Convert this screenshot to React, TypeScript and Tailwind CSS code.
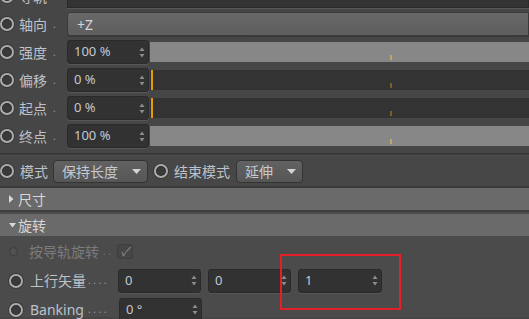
import React from "react";

const CJK = { fontFamily: '"Noto Sans", "Noto Sans CJK SC", sans-serif' };

function Radio({ dim = false }: { dim?: boolean }) {
  if (dim) {
    return (
      <div className="h-[9px] w-[9px] shrink-0 rounded-full border border-[#3c3c3c] bg-[#525252]" />
    );
  }
  return (
    <div className="h-[14px] w-[14px] shrink-0 rounded-full border-2 border-[#ababab] bg-[#3a3a3a] shadow-[inset_0_0_0_1px_#2a2a2a,0_0_0_1px_#3a3a3a]" />
  );
}

function Spin() {
  return (
    <svg width="6" height="11" viewBox="0 0 6 11" className="shrink-0">
      <path d="M3 0.5 L5.5 4 L0.5 4 Z" fill="#8c8c8c" />
      <path d="M3 10.5 L5.5 7 L0.5 7 Z" fill="#8c8c8c" />
    </svg>
  );
}

function Caret() {
  return (
    <svg width="9" height="5" viewBox="0 0 9 5" className="shrink-0">
      <path d="M0 0 L9 0 L4.5 5 Z" fill="#d4d4d4" />
    </svg>
  );
}

function NumField({ value, w = "w-[82px]" }: { value: string; w?: string }) {
  return (
    <div
      className={`flex h-[24px] ${w} shrink-0 items-center rounded-[3px] border border-[#2a2a2a] bg-[#323232] pl-[6px] pr-[3px] text-[13px] text-[#c4c9d1] shadow-[0_1px_0_#575757]`}
    >
      <span className="flex-1">{value}</span>
      <Spin />
    </div>
  );
}

function Slider({ light, zero }: { light: boolean; zero?: boolean }) {
  return (
    <div
      className={`relative ml-[1px] h-[20px] flex-1 ${
        light ? "bg-[#878787]" : "bg-[#333333]"
      }`}
    >
      {zero && <div className="absolute left-[1px] top-0 h-full w-[2px] bg-[#e29c00]" />}
      <div
        className={`absolute bottom-[2px] left-[240px] h-[5px] w-[2px] ${
          light ? "bg-[#c4a464]" : "bg-[#7d5d22]"
        }`}
      />
    </div>
  );
}

function Label({ text, dots = "." }: { text: string; dots?: string }) {
  return (
    <div className="flex w-[67px] shrink-0 items-center">
      <Radio />
      <span className="ml-[5px] text-[14px] text-[#bcc1ca]">{text}</span>
      <span className="ml-[6px] text-[10px] text-[#9a9a9a]">{dots}</span>
    </div>
  );
}

function TopRow({ label, children }: { label: string; children: React.ReactNode }) {
  return (
    <div className="flex h-[28px] items-center">
      <Label text={label} />
      {children}
    </div>
  );
}

function Dropdown({ text, w }: { text: string; w: string }) {
  return (
    <div
      className={`flex h-[23px] ${w} items-center rounded-[4px] border border-[#343434] bg-gradient-to-b from-[#626262] to-[#565656] pl-[8px] pr-[6px] text-[14px] text-[#c6cad0]`}
    >
      <span className="flex-1">{text}</span>
      <Caret />
    </div>
  );
}

function Header({ text, open }: { text: string; open: boolean }) {
  return (
    <div className="flex h-[22px] items-center bg-[#6a6a6a] pl-[9px] text-[14px] text-[#d6d6d6]">
      {open ? (
        <svg width="7" height="5" viewBox="0 0 7 5">
          <path d="M0 0 L7 0 L3.5 4.5 Z" fill="#d8d8d8" />
        </svg>
      ) : (
        <svg width="5" height="8" viewBox="0 0 5 8">
          <path d="M0 0 L4.5 4 L0 8 Z" fill="#d8d8d8" />
        </svg>
      )}
      <span className={open ? "ml-[2px]" : "ml-[4px]"}>{text}</span>
    </div>
  );
}

export default function App() {
  return (
    <div
      className="relative h-[319px] w-[529px] overflow-hidden bg-[#464646]"
      style={CJK}
    >
      {/* top parameters, first row scrolled partly out of view */}
      <div className="-mt-[18px] pb-[3px]">
        <TopRow label="导轨">
          <div className="h-[24px] flex-1 border border-[#2a2a2a] bg-[#333333] shadow-[0_1px_0_#575757]" />
        </TopRow>
        <TopRow label="轴向">
          <div className="flex h-[24px] flex-1 items-center rounded-l-[3px] border border-[#3a3a3a] bg-gradient-to-b from-[#686868] to-[#5e5e5e] pl-[9px] text-[14px] text-[#d2d6dc] shadow-[0_1px_0_#383838]">
            +Z
          </div>
        </TopRow>
        <TopRow label="强度">
          <NumField value="100 %" />
          <Slider light />
        </TopRow>
        <TopRow label="偏移">
          <NumField value="0 %" />
          <Slider light={false} zero />
        </TopRow>
        <TopRow label="起点">
          <NumField value="0 %" />
          <Slider light={false} zero />
        </TopRow>
        <TopRow label="终点">
          <NumField value="100 %" />
          <Slider light />
        </TopRow>
      </div>

      <div className="h-[2px] bg-[#393939]" />
      <div className="h-[1px] bg-[#4e4e4e]" />

      {/* mode row */}
      <div className="flex h-[30px] items-center bg-[#474747]">
        <Radio />
        <span className="ml-[6px] text-[14px] text-[#bcc1ca]">模式</span>
        <div className="ml-[5px]">
          <Dropdown text="保持长度" w="w-[95px]" />
        </div>
        <div className="ml-[6px]">
          <Radio />
        </div>
        <span className="ml-[6px] text-[14px] text-[#bcc1ca]">结束模式</span>
        <div className="ml-[6px]">
          <Dropdown text="延伸" w="w-[67px]" />
        </div>
      </div>

      <div className="h-[2px] bg-[#3a3a3a]" />
      <Header text="尺寸" open={false} />
      <div className="h-[2px] bg-[#3e3e3e]" />
      <div className="h-[2px] bg-[#4c4c4c]" />
      <Header text="旋转" open />

      {/* rotation section */}
      <div className="h-[81px] bg-[#4b4b4b] pt-[1px]">
        <div className="flex h-[29px] items-center">
          <div className="ml-[9px]">
            <Radio dim />
          </div>
          <span className="ml-[11px] text-[14px] text-[#7b7b7b]">按导轨旋转</span>
          <span className="ml-[4px] text-[10px] text-[#777]">. .</span>
          <div className="ml-[6px] flex h-[15px] w-[16px] items-center justify-center rounded-[3px] border border-[#3e3e3e] bg-[#464646] text-[12px] italic text-[#8a8a8a]">
            ✓
          </div>
        </div>
        <div className="flex h-[29px] items-center">
          <div className="ml-[9px]">
            <Radio />
          </div>
          <span className="ml-[7px] text-[14px] text-[#bcc1ca]">上行矢量</span>
          <span className="ml-[2px] w-[30px] text-[10px] text-[#9a9a9a]">. . . .</span>
          <NumField value="0" w="w-[83px]" />
          <div className="ml-[7px]">
            <NumField value="0" w="w-[83px]" />
          </div>
          <div className="ml-[7px]">
            <NumField value="1" w="w-[84px]" />
          </div>
        </div>
        <div className="flex h-[29px] items-center">
          <div className="ml-[9px]">
            <Radio />
          </div>
          <span className="ml-[7px] text-[14px] text-[#bcc1ca]">Banking</span>
          <span className="ml-[4px] w-[31px] text-[10px] text-[#9a9a9a]">. . . .</span>
          <NumField value="0 °" w="w-[83px]" />
        </div>
      </div>

      {/* annotation */}
      <div className="absolute left-[280px] top-[254px] h-[56px] w-[121px] border-2 border-[#e3202a]" />
    </div>
  );
}
